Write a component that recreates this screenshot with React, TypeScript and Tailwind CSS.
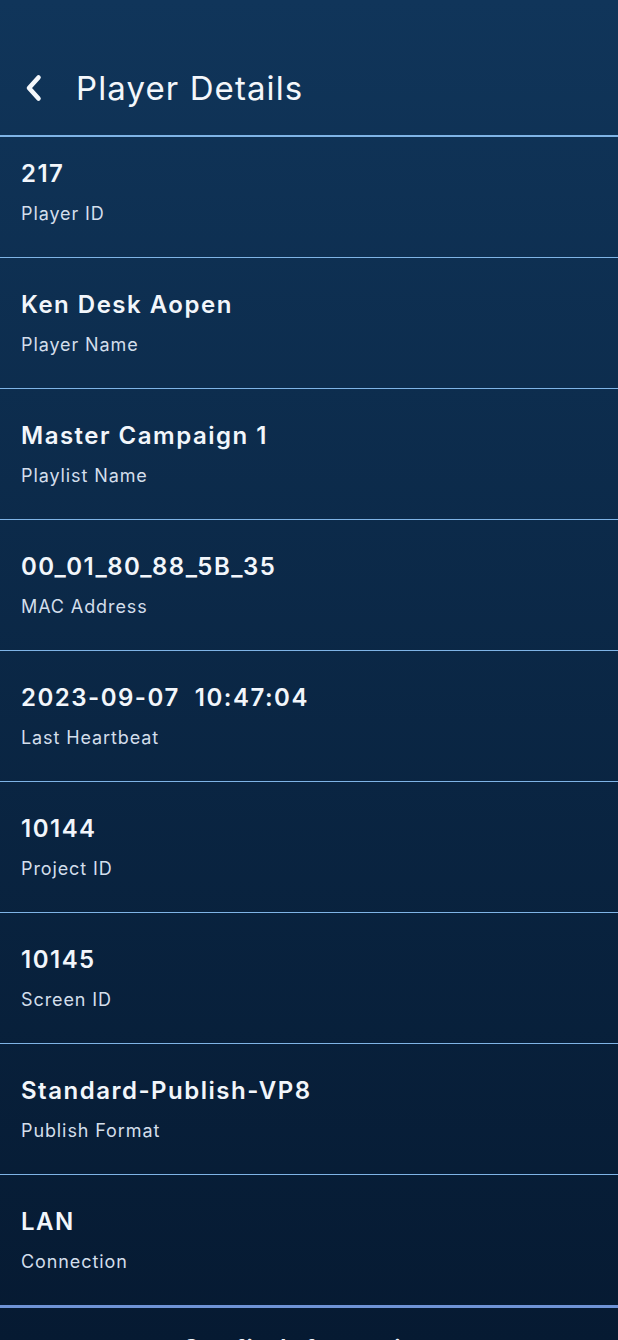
import React from "react";

const rows: { value: string; label: string }[] = [
  { value: "217", label: "Player ID" },
  { value: "Ken Desk Aopen", label: "Player Name" },
  { value: "Master Campaign 1", label: "Playlist Name" },
  { value: "00_01_80_88_5B_35", label: "MAC Address" },
  { value: "2023-09-07  10:47:04", label: "Last Heartbeat" },
  { value: "10144", label: "Project ID" },
  { value: "10145", label: "Screen ID" },
  { value: "Standard-Publish-VP8", label: "Publish Format" },
  { value: "LAN", label: "Connection" },
];

export default function App() {
  return (
    <div
      className="w-[618px] h-[1340px] overflow-hidden bg-gradient-to-b from-[#10355a] to-[#061a32] text-white"
      style={{ fontFamily: "Inter, 'Noto Sans', sans-serif" }}
    >
      <header className="h-[135px] flex items-end pb-[29px] pl-[22px]">
        <div className="flex items-center h-[36px]">
          <svg width="24" height="28" viewBox="0 0 24 28" className="mr-[30px]">
            <path d="M16.5 3.5 L7 14 L16.5 24.5" fill="none" stroke="#f4f7fb" strokeWidth="4.6" strokeLinecap="round" strokeLinejoin="round" />
          </svg>
          <h1 className="text-[33px] leading-[36px] font-normal text-[#f4f7fb] tracking-[1.1px]">Player Details</h1>
        </div>
      </header>
      {rows.map((r, i) => (
        <div
          key={r.label}
          className={
            i === 0
              ? "border-t-2 border-[#7fb4e6] pl-[21px] pt-[21px] pb-[31px]"
              : "border-t border-[#7fb4e6] pl-[21px] pt-[31px] pb-[31px]"
          }
        >
          <div className="text-[24px] leading-[32px] font-semibold text-[#f2f6fb] whitespace-pre tracking-[1.5px]">{r.value}</div>
          <div className="mt-[12px] text-[18px] leading-[24px] text-[#d3deeb] tracking-[0.9px]">{r.label}</div>
        </div>
      ))}
      <div className="border-t-[3px] border-[#6f93d6] pt-[25px] flex justify-center">
        <span className="text-[24px] leading-[32px] font-semibold text-[#f2f6fb] tracking-[2px]">Config Information</span>
      </div>
    </div>
  );
}
